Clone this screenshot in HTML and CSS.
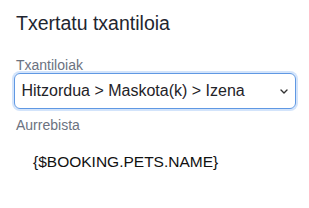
FILE: index.html
```html
<!DOCTYPE html>
<html>
<head>
<meta charset="utf-8">
<link rel="stylesheet" href="styles.css">
</head>
<body>
<div class="panel">
  <h1 class="title">Txertatu txantiloia</h1>
  <div class="field">
    <label class="label">Txantiloiak</label>
    <div class="select">
      <span class="select-text">Hitzordua &gt; Maskota(k) &gt; Izena</span>
      <svg class="chevron" width="8" height="5" viewBox="0 0 8 5"><path d="M1 1l3 3 3-3" fill="none" stroke="#333" stroke-width="1.4" stroke-linecap="round" stroke-linejoin="round"/></svg>
    </div>
  </div>
  <div class="field">
    <div class="label">Aurrebista</div>
    <div class="preview">{$BOOKING.PETS.NAME}</div>
  </div>
</div>
</body>
</html>
```
FILE: styles.css
```css
html, body {
  margin: 0;
  padding: 0;
  background: #ffffff;
}
body {
  font-family: "Liberation Sans", Arial, sans-serif;
  color: #1f2937;
}
.panel {
  padding: 10.5px 13px 0 14px;
}
.title {
  margin: 0 0 0 2px;
  font-size: 19.5px;
  font-weight: 400;
  line-height: 24px;
  color: #1f2630;
}
.field {
  margin-top: 22px;
}
.field + .field {
  margin-top: 8px;
}
.label {
  display: block;
  margin-left: 2px;
  font-size: 14px;
  line-height: 16px;
  color: #6b7280;
}
.select {
  box-sizing: border-box;
  margin-top: 0.5px;
  height: 36px;
  border: 1.5px solid #5f98e3;
  border-radius: 6px;
  box-shadow: 0 0 0 2px #d3e4fb;
  display: flex;
  align-items: center;
  justify-content: space-between;
  padding: 0 7.5px 0 6.5px;
}
.select-text {
  font-size: 16px;
  color: #1f2328;
}
.chevron {
  margin-right: 0;
}
.preview {
  padding: 18.5px 0 0 19px;
  font-size: 15.5px;
  line-height: 20px;
  color: #111111;
}
```
